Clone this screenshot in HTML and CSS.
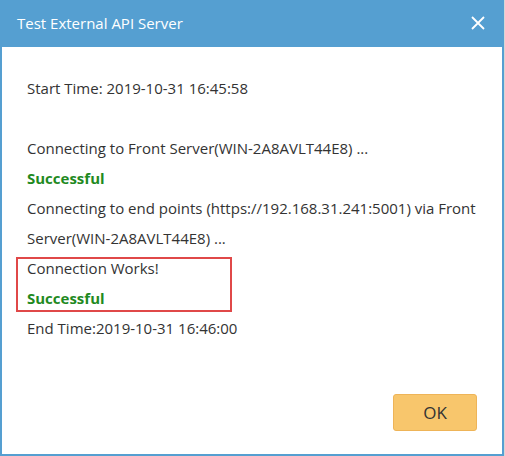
FILE: index.html
```html
<!DOCTYPE html>
<html>
<head>
<meta charset="utf-8">
<link rel="stylesheet" href="styles.css">
</head>
<body>
<div class="dialog">
  <div class="dialog-header">
    <span class="dialog-title">Test External API Server</span>
    <svg class="close-icon" width="14" height="14" viewBox="0 0 14 14"><path d="M1 1L13 13M13 1L1 13" stroke="#fff" stroke-width="1.8" fill="none"/></svg>
  </div>
  <div class="dialog-body">
    <div class="line">Start Time: 2019-10-31 16:45:58</div>
    <div class="line blank"></div>
    <div class="line">Connecting to Front Server(WIN-2A8AVLT44E8) ...</div>
    <div class="line ok">Successful</div>
    <div class="line">Connecting to end points (https://192.168.31.241:5001) via Front</div>
    <div class="line">Server(WIN-2A8AVLT44E8) ...</div>
    <div class="highlight">
      <div class="line">Connection Works!</div>
      <div class="line ok">Successful</div>
    </div>
    <div class="line">End Time:2019-10-31 16:46:00</div>
  </div>
  <div class="dialog-footer">
    <button class="btn-ok">OK</button>
  </div>
</div>
</body>
</html>
```
FILE: styles.css
```css
html, body {
  margin: 0;
  padding: 0;
}
body {
  width: 505px;
  height: 456px;
  background: #d6d6d6;
  font-family: "Open Sans", "Noto Sans", sans-serif;
  overflow: hidden;
}
.dialog {
  box-sizing: border-box;
  width: 504px;
  height: 456px;
  border: 2px solid #559fd1;
  border-top: 0;
  background: #fff;
  display: flex;
  flex-direction: column;
}
.dialog-header {
  height: 47px;
  margin: 0 -2px;
  background: #559fd1;
  display: flex;
  align-items: center;
  justify-content: space-between;
  padding: 0 17px 0 17px;
  box-sizing: border-box;
}
.dialog-title {
  color: #fff;
  font-size: 15px;
  margin-top: -1px;
}
.close-icon {
  margin-top: -1px;
  margin-right: 2px;
}
.dialog-body {
  flex: 1;
  padding: 26px 25px 0 25px;
  color: #333;
  font-size: 15px;
}
.line {
  line-height: 30px;
  height: 30px;
  white-space: nowrap;
}
.ok {
  color: #1f8a1f;
  font-weight: bold;
}
.highlight {
  position: relative;
}
.highlight::after {
  content: "";
  position: absolute;
  top: 4px;
  bottom: 1px;
  left: -11px;
  width: 216px;
  border: 2px solid #e04848;
  box-sizing: border-box;
}
.dialog-footer {
  display: flex;
  justify-content: flex-end;
  padding: 0 25px 23px 0;
}
.btn-ok {
  width: 84px;
  height: 37px;
  background: #f8c66c;
  border: 1px solid #eeb458;
  border-radius: 3px;
  color: #333;
  font-family: "Open Sans", "Noto Sans", sans-serif;
  font-size: 17px;
  padding: 0;
}
```
